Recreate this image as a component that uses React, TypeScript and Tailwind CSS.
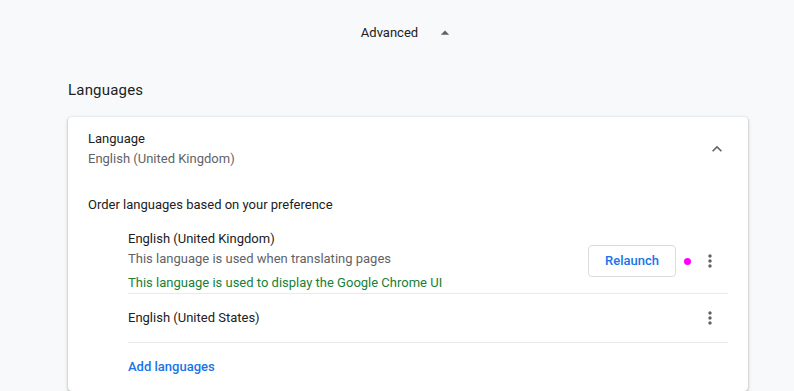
import React from "react";

const MoreVert = () => (
  <svg width="20" height="20" viewBox="0 0 24 24" fill="#5f6368">
    <path d="M12 8c1.1 0 2-.9 2-2s-.9-2-2-2-2 .9-2 2 .9 2 2 2zm0 2c-1.1 0-2 .9-2 2s.9 2 2 2 2-.9 2-2-.9-2-2-2zm0 6c-1.1 0-2 .9-2 2s.9 2 2 2 2-.9 2-2-.9-2-2-2z" />
  </svg>
);

export default function App() {
  return (
    <div
      className="w-[794px] h-[391px] overflow-hidden bg-[#f8f9fa] text-[13px] text-[#202124]"
      style={{ fontFamily: "Roboto, 'Liberation Sans', sans-serif" }}
    >
      <div className="ml-[68px] w-[680px] flex flex-col">
        <div className="h-[64px] pt-[2px] flex items-center justify-center gap-[17px]">
          <span className="leading-[20px]">Advanced</span>
          <svg width="20" height="20" viewBox="0 0 24 24" fill="#5f6368">
            <path d="M7 14l5-5 5 5z" />
          </svg>
        </div>
        <div className="h-[53px] pb-[2px] flex items-center text-[15px] leading-[20px] tracking-[0.2px]">
          Languages
        </div>
        <div className="bg-white rounded-[4px] shadow-[0_1px_2px_0_rgba(60,64,67,0.3),0_1px_3px_1px_rgba(60,64,67,0.15)] px-[20px]">
          <div className="h-[64px] flex items-center justify-between">
            <div className="flex flex-col leading-[20px]">
              <span>Language</span>
              <span className="text-[#5f6368]">English (United Kingdom)</span>
            </div>
            <svg width="20" height="20" viewBox="0 0 24 24" fill="#5f6368" className="mr-[1px]">
              <path d="M7.41 15.41L12 10.83l4.59 4.58L18 14l-6-6-6 6z" />
            </svg>
          </div>
          <div className="pt-[14px] leading-[20px]">Order languages based on your preference</div>
          <div className="ml-[40px] flex flex-col">
            <div className="pt-[14px] flex items-center border-b border-[#e8eaed]">
              <div className="flex-1 flex flex-col leading-[20px]">
                <span>English (United Kingdom)</span>
                <span className="text-[#5f6368]">This language is used when translating pages</span>
                <span className="text-[#188038] mt-[4px]">This language is used to display the Google Chrome UI</span>
              </div>
              <button className="h-[32px] w-[88px] rounded-[4px] border border-[#dadce0] bg-white text-[#1a73e8] font-medium text-[13px] -mt-[1px]">
                Relaunch
              </button>
              <span className="ml-[8px] w-[7px] h-[7px] rounded-full bg-[#ff00ff]" />
              <div className="w-[37px] h-[36px] flex items-center justify-center">
                <MoreVert />
              </div>
            </div>
            <div className="h-[49px] flex items-center border-b border-[#e8eaed]">
              <span className="flex-1 leading-[20px]">English (United States)</span>
              <div className="w-[36px] h-[36px] flex items-center justify-center">
                <MoreVert />
              </div>
            </div>
            <div className="h-[48px] flex items-center">
              <span className="text-[#1a73e8] font-medium leading-[20px]">Add languages</span>
            </div>
          </div>
        </div>
      </div>
    </div>
  );
}
